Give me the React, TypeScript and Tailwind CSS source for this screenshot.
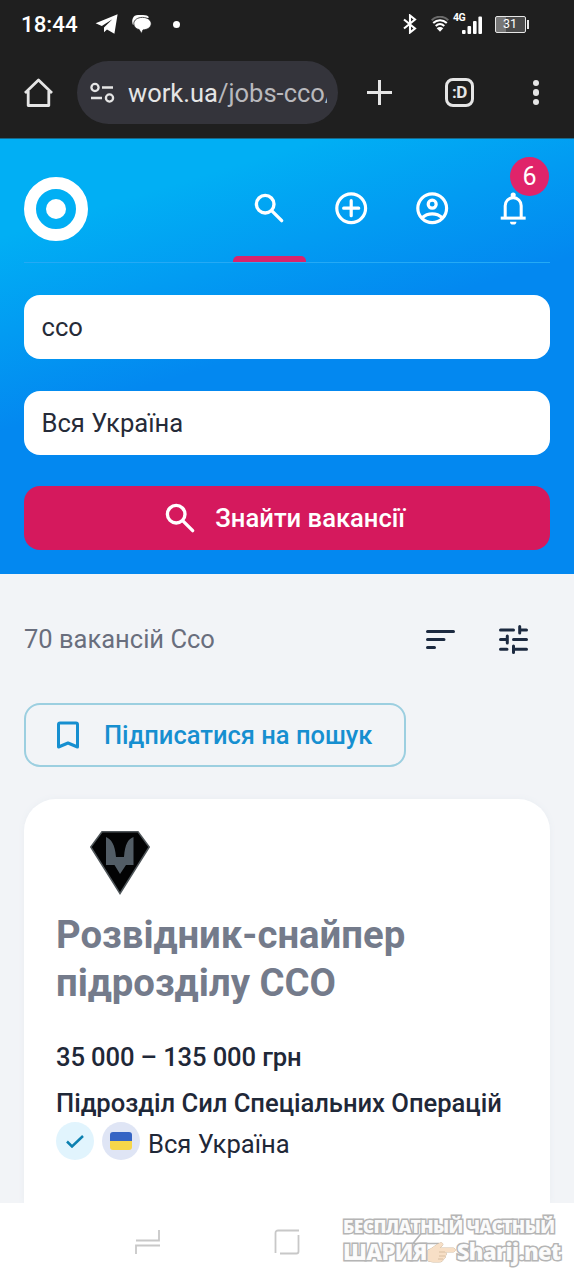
import React from 'react'

type IconProps = { className?: string }

function SearchIcon({ className }: IconProps) {
  return (
    <svg viewBox="0 0 24 24" fill="none" stroke="currentColor" strokeWidth="2.1" strokeLinecap="round" className={className}>
      <circle cx="9.5" cy="9.5" r="5.5" />
      <path d="M14 14l5.8 5.8" />
    </svg>
  )
}

function AddIcon({ className }: IconProps) {
  return (
    <svg viewBox="0 0 24 24" fill="none" stroke="currentColor" strokeWidth="2" className={className}>
      <circle cx="12" cy="12" r="9" />
      <path d="M12 7.3v9.4M7.3 12h9.4" strokeLinecap="round" />
    </svg>
  )
}

function AccountIcon({ className }: IconProps) {
  return (
    <svg viewBox="0 0 24 24" fill="none" stroke="currentColor" strokeWidth="2" className={className}>
      <circle cx="12" cy="12" r="9" />
      <circle cx="12" cy="9.5" r="2.5" />
      <path d="M5.7 18c1.8-1.6 4-2.4 6.3-2.4s4.5.8 6.3 2.4" />
    </svg>
  )
}

function BellIcon({ className }: IconProps) {
  return (
    <svg viewBox="0 0 24 24" fill="none" stroke="currentColor" strokeWidth="1.9" className={className}>
      <path d="M4.200 18.200h15.600" />
      <path d="M7 18v-7.600a5 5 0 0 1 10 0V18" />
      <circle cx="12" cy="3.800" r="1.600" fill="currentColor" stroke="none" />
      <path d="M10 20.400h4a2 1.800 0 0 1-4 0z" fill="currentColor" stroke="none" />
    </svg>
  )
}

function StatusBar() {
  return (
    <div className="flex h-12 items-center pl-[21px] pr-[45px] text-white">
      <span className="w-[74px] text-[22.300px] font-medium leading-none">18:44</span>
      <svg viewBox="0 0 23 20" className="h-5 w-[23px]" fill="currentColor">
        <path d="M.6 9.300 22.600.2 19.400 19.700 12 15.600 9 18.200V13.400L17.400 5.200 6.800 11.900z" />
      </svg>
      <svg viewBox="0 0 22 20" className="ml-[13px] h-5 w-[22px]" fill="currentColor">
        <path d="M2 11C0 6 2 1 7 1h5c3 0 5 .7 6 2.500L10 6z" />
        <path
          d="M11.500 3.400c5 0 8.700 2.600 8.700 6.300 0 3.400-3.200 5.800-8.200 6.200l-1.600 3.700-2.200-4C5 15 2.800 12.700 2.800 9.700c0-3.800 3.800-6.300 8.700-6.300z"
          stroke="#1f1f1f"
          strokeWidth="0.800"
        />
      </svg>
      <span className="ml-[20px] size-[7px] rounded-full bg-white" />
      <svg viewBox="0 0 14 20" className="ml-auto h-5 w-[14px]" fill="none" stroke="currentColor" strokeWidth="2.100">
        <path d="M1 5.500l11 9L7 18.500V1.500l5 4L1 14.500" />
      </svg>
      <svg viewBox="0 0 18 16" className="ml-[14px] h-4 w-[18px]" fill="none" stroke="currentColor" strokeWidth="2">
        <path d="M.7 4.300C5.500-.5 12.500-.5 17.300 4.300" stroke="#6b6b6b" />
        <path d="M2.200 7c4-3.800 9.600-3.800 13.600 0M4.700 10c2.600-2.400 6-2.400 8.600 0" />
        <path d="M9 15.800l-3.300-3.600c1.900-1.500 4.700-1.500 6.600 0z" fill="currentColor" stroke="none" />
      </svg>
      <div className="relative ml-1 h-6 w-[30px]">
        <span className="absolute left-0 top-0 text-[10.500px] font-bold leading-[12px] tracking-[-0.500px]">4G</span>
        <svg viewBox="0 0 20 18" className="absolute left-[9px] top-[4px] h-[18px] w-5" fill="currentColor">
          <rect x="0" y="14" width="3.600" height="4" rx="1" />
          <rect x="5.500" y="10" width="3.600" height="8" rx="1" />
          <rect x="11" y="5" width="3.600" height="13" rx="1" />
          <rect x="16.400" y="0.500" width="3.600" height="17.500" rx="1" />
        </svg>
      </div>
      <div className="ml-[12px] flex h-[17px] w-[31px] items-center justify-center rounded-[2px] border border-[#e6e6e6] bg-gradient-to-r from-[#777] from-35% to-[#4a4a4a] to-35% pr-px text-[12.500px] leading-none">
        31
      </div>
      <span className="ml-px h-[9px] w-[2px] bg-[#e6e6e6]" />
    </div>
  )
}

function BrowserBar() {
  return (
    <div className="flex h-[91px] items-center border-b border-[#17698c] pl-6 pr-[35px] pb-px text-[#e5e5e5]">
      <svg viewBox="0 0 29 30" className="h-[30px] w-[29px]" fill="none" stroke="currentColor" strokeWidth="2.800" strokeLinejoin="round">
        <path d="M1 15L14.500 2 28 15M4.200 13v14.500h20.600V13" />
      </svg>
      <div className="ml-6 flex h-[63px] w-[261px] items-center rounded-full bg-[#34343b] pl-[13px]">
        <svg viewBox="0 0 25 22" className="h-[22px] w-[25px] shrink-0" fill="none" stroke="currentColor" strokeWidth="2.300">
          <circle cx="5" cy="5.500" r="3.600" />
          <path d="M12 5.500h11M1 16h11" />
          <circle cx="19.500" cy="16" r="3.600" />
        </svg>
        <div className="ml-[13px] w-[199px] overflow-hidden whitespace-nowrap text-[25.500px] leading-8">
          work.ua<span className="text-[#b9b9bd]">/jobs-cco/</span>
        </div>
      </div>
      <svg viewBox="0 0 25 25" className="ml-[29px] size-[25px]" fill="none" stroke="currentColor" strokeWidth="3">
        <path d="M12.500 0v25M0 12.500h25" />
      </svg>
      <div className="ml-[53px] flex size-[29px] items-center justify-center rounded-[8px] border-[3px] border-current text-[17px] font-bold leading-none tracking-[-0.500px]">
        :D
      </div>
      <div className="ml-auto flex flex-col gap-[3px]">
        <span className="size-[6.500px] rounded-full bg-current" />
        <span className="size-[6.500px] rounded-full bg-current" />
        <span className="size-[6.500px] rounded-full bg-current" />
      </div>
    </div>
  )
}

function SearchHeader() {
  return (
    <header className="h-[435px] bg-[linear-gradient(163deg,#01aff4_16%,#0388f0_48%)] px-6 pt-[38px]">
      <div className="flex h-[86px] justify-between border-b border-[#25aaf5]">
        <div className="flex size-16 items-center justify-center rounded-full border-[12px] border-white">
          <span className="size-5 rounded-full bg-white" />
        </div>
        <nav className="flex gap-[8.300px] text-white">
          <a className="flex w-[73px] flex-col items-center justify-between">
            <SearchIcon className="mt-[12px] size-[38.400px]" />
            <span className="h-[6.500px] w-full rounded-t-[5px] bg-[#d9246c]" />
          </a>
          <a className="flex w-[73px] justify-center pt-[12px]">
            <AddIcon className="size-[38.400px]" />
          </a>
          <a className="flex w-[73px] justify-center pt-[12px]">
            <AccountIcon className="size-[38.400px]" />
          </a>
          <a className="relative flex w-[73px] justify-center pt-[12px]">
            <BellIcon className="size-[38.400px]" />
            <span className="absolute -top-5 right-px flex size-[39px] items-center justify-center rounded-full bg-[#e0246a] text-[25px] leading-none">
              6
            </span>
          </a>
        </nav>
      </div>
      <div className="mt-8 flex flex-col gap-8 text-[25.600px]">
        <div className="flex h-16 items-center rounded-2xl bg-white px-[17.500px] text-[#262b38]">ссо</div>
        <div className="flex h-16 items-center rounded-2xl bg-white px-[17.500px] text-[#262b38]">Вся Україна</div>
        <button className="-mt-px flex h-16 items-center justify-center rounded-2xl bg-[#d5195d] pr-2 font-medium text-white">
          <SearchIcon className="mr-4 size-[38.400px]" />
          Знайти вакансії
        </button>
      </div>
    </header>
  )
}

function JobCard() {
  return (
    <article className="mt-8 h-[404px] rounded-t-[32px] bg-white px-8 pt-8 text-[#1f2838] shadow-[0_0_6px_#e9edf2]">
      <svg viewBox="0 0 60 64" className="ml-[34px] h-16 w-[60px]">
        <path d="M12 .8h36L59.200 16 30 62.500.8 16z" fill="#020304" stroke="#4f565a" strokeWidth="1.500" />
        <path d="M16 6c5 2 9 7 10 20h8c1-13 4-18 9.500-20v28H36l-6 9-5.500-9H16z" fill="#525d66" />
      </svg>
      <h2 className="mt-4 text-[38.300px] font-bold leading-[48px] text-[#747b8b]">
        Розвідник-снайпер
        <br />
        підрозділу ССО
      </h2>
      <p className="mt-[31px] text-[25.600px] font-medium leading-[38px] tracking-[-0.120px]">35 000 – 135 000 грн</p>
      <p className="mt-2 text-[25.600px] font-medium leading-[38px] tracking-[-0.030px]">Підрозділ Сил Спеціальних Операцій</p>
      <div className="flex h-[38px] items-center text-[25.600px]">
        <span className="flex size-[38px] items-center justify-center rounded-full bg-[#e1f4fd]">
          <svg viewBox="0 0 18 13" className="h-[13px] w-[18px]" fill="none" stroke="#0c80b0" strokeWidth="2.500">
            <path d="M1 6.500l5 5L17 1" />
          </svg>
        </span>
        <span className="ml-2 flex size-[38px] items-center justify-center rounded-full bg-[#dfe5f5]">
          <span className="flex h-[18px] w-[22px] flex-col overflow-hidden rounded-[3px]">
            <span className="h-1/2 bg-[#3564c4]" />
            <span className="h-1/2 bg-[#f6d64a]" />
          </span>
        </span>
        <span className="ml-2 pt-1.5">Вся Україна</span>
      </div>
    </article>
  )
}

function Results() {
  return (
    <main className="h-[629px] overflow-hidden bg-[#f2f4f7] px-6">
      <div className="flex h-[129px] items-center pr-[22px] pt-px">
        <h1 className="text-[25.500px] text-[#696e7d]">70 вакансій Ссо</h1>
        <svg viewBox="0 0 29 21" className="ml-auto h-[21px] w-[29px]" fill="none" stroke="#1c2a40" strokeWidth="3" strokeLinecap="round">
          <path d="M1.500 2.500h26M1.500 10.500h16.500M1.500 18.500h7" />
        </svg>
        <svg viewBox="0 0 29 29" className="ml-[44px] size-[29px]" fill="none" stroke="#1c2a40" strokeWidth="3" strokeLinecap="round">
          <path d="M1.500 5h13M20.700 1.500v6.500M21 5h6.500M1.500 14.500H8M8.300 11v7M14.500 14.500h13M1.500 24.300H8M14.500 21v6.500M15 24.300h12.500" />
        </svg>
      </div>
      <button className="flex h-16 w-[382px] items-center rounded-2xl border-2 border-[#9ccfe0] text-[25.500px] font-medium text-[#168fd0]">
        <svg viewBox="0 0 24 28" className="ml-[30px] h-7 w-6" fill="none" stroke="currentColor" strokeWidth="3" strokeLinejoin="round">
          <path d="M4 2h16q1.500 0 1.500 1.500V26L12 22l-9.500 4V3.500Q2.500 2 4 2z" />
        </svg>
        <span className="ml-[24px]">Підписатися на пошук</span>
      </button>
      <JobCard />
    </main>
  )
}

function SystemNav() {
  return (
    <footer className="flex h-[77px] items-center bg-white pl-[135px] pt-px">
      <svg viewBox="0 0 26 26" className="size-[26px]" fill="none" stroke="#c8c8c8" strokeWidth="1.800">
        <path d="M1 11.500h23V1M1 25V16.500h24" />
      </svg>
      <svg viewBox="0 0 26 26" className="ml-[113px] size-[26px]" fill="none" stroke="#c8c8c8" strokeWidth="1.800">
        <path d="M25 1.500H4a2.500 2.500 0 0 0-2.500 2.500v20M24.500 6v16.500a2 2 0 0 1-2 2H6" />
      </svg>
      <svg viewBox="0 0 28 26" className="ml-[112px] h-[26px] w-7" fill="none" stroke="#b5b5b5" strokeWidth="1.600">
        <path d="M12 1L1 14.500h26" />
      </svg>
    </footer>
  )
}

function Watermark() {
  return (
    <div className="absolute left-[343px] top-[1214px] font-['Open_Sans',sans-serif] font-extrabold text-white/95 [-webkit-text-stroke:3px_#b5b5b5] [paint-order:stroke_fill]">
      <div className="whitespace-nowrap text-[17.500px] leading-[25px] tracking-[-0.620px]">БЕСПЛАТНЫЙ ЧАСТНЫЙ</div>
      <div className="flex items-center whitespace-nowrap text-[22px] leading-[25px] tracking-[-0.700px]">
        ШАРИЯ
        <svg viewBox="0 0 30 22" className="h-[22px] w-[30px] shrink-0">
          <path
            d="M1 9C5 8 8 4 13 2c2-1 4 1 2 3l-2 2h13c3 0 3 4 0 4h-8c2 1 2 3 0 4 1 1 0 3-2 3 0 2-1 3-4 3H6c-2 0-3-1-5-1z"
            fill="#f7dfc6"
            stroke="#c3a98c"
            strokeWidth="0.800"
          />
          <path d="M12 11h6M12 15h6M11 18h5" stroke="#d0b598" strokeWidth="0.800" />
        </svg>
        Sharij.net
      </div>
    </div>
  )
}

export default function App() {
  return (
    <div className="relative h-[1280px] w-[574px] overflow-hidden font-['Roboto',sans-serif]">
      <div className="bg-[#1f1f1f]">
        <StatusBar />
        <BrowserBar />
      </div>
      <SearchHeader />
      <Results />
      <SystemNav />
      <Watermark />
    </div>
  )
}
